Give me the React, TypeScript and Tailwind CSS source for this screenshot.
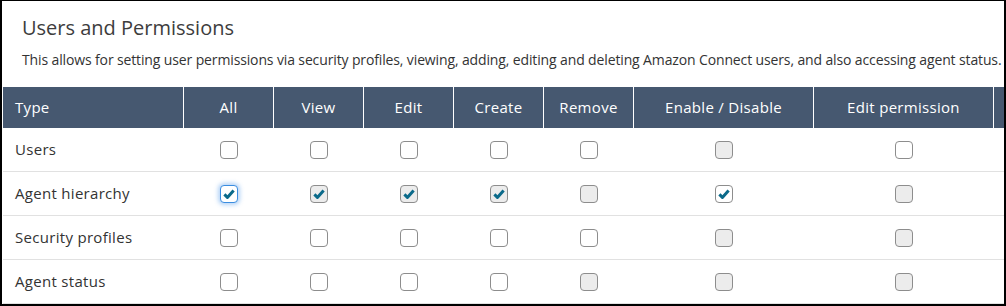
const columns = [
  { label: 'All', w: 'w-[90px]' },
  { label: 'View', w: 'w-[90px]' },
  { label: 'Edit', w: 'w-[90px]' },
  { label: 'Create', w: 'w-[90px]' },
  { label: 'Remove', w: 'w-[90px]' },
  { label: 'Enable / Disable', w: 'w-[180px]' },
  { label: 'Edit permission', w: 'w-[180px]' },
];

// c = checked, d = disabled, f = focused
type Box = { c?: boolean; d?: boolean; f?: boolean };

const rows: { type: string; boxes: Box[] }[] = [
  { type: 'Users', boxes: [{}, {}, {}, {}, {}, { d: true }, {}] },
  {
    type: 'Agent hierarchy',
    boxes: [
      { c: true, f: true },
      { c: true, d: true },
      { c: true, d: true },
      { c: true, d: true },
      { d: true },
      { c: true },
      { d: true },
    ],
  },
  { type: 'Security profiles', boxes: [{}, {}, {}, {}, {}, { d: true }, { d: true }] },
  { type: 'Agent status', boxes: [{}, {}, {}, {}, { d: true }, { d: true }, { d: true }] },
];

function Checkbox({ c, d, f }: Box) {
  return (
    <span
      className={
        'flex h-[18px] w-[18px] items-center justify-center rounded-[4px] border ' +
        (f
          ? 'border-[#3b8de0] bg-white shadow-[0_0_4px_2px_rgba(40,130,230,0.35)]'
          : d
            ? 'border-[#8d8d8d] bg-[#ececec]'
            : 'border-[#8d8d8d] bg-white')
      }
    >
      {c && (
        <svg width="14" height="14" viewBox="0 0 14 14" fill="none">
          <path
            d="M2.4 7.4 L5.4 10.4 L11.6 3.4"
            stroke="#0b6a8a"
            strokeWidth="3"
            strokeLinejoin="round"
          />
        </svg>
      )}
    </span>
  );
}

export default function App() {
  return (
    <div className="h-[306px] w-[1006px] overflow-hidden border-t border-r-2 border-b-2 border-l-2 border-black bg-white font-['Open_Sans','Noto_Sans',sans-serif] text-[#333]">
      {/* heading */}
      <div className="pl-5 pt-[13px]">
        <h1 className="text-[20px] leading-[28px] text-[#3d3d3d]">Users and Permissions</h1>
        <p className="mt-[9px] whitespace-nowrap text-[14px] leading-[18px] tracking-[-0.13px] text-[#333]">
          This allows for setting user permissions via security profiles, viewing, adding, editing and
          deleting Amazon Connect users, and also accessing agent status.
        </p>
      </div>

      {/* table */}
      <div className="ml-px mt-[18px]">
        <div className="flex h-[41px] bg-[#465870] text-[15px] tracking-[0.3px] text-white">
          <div className="flex w-[180px] items-center pl-3">Type</div>
          {columns.map((col) => (
            <div key={col.label} className={`flex ${col.w} items-center justify-center border-l border-white`}>
              {col.label}
            </div>
          ))}
          <div className="flex-1 border-l border-white" />
        </div>

        {rows.map((row) => (
          <div key={row.type} className="flex h-[44px] border-b border-[#e1e1e1] text-[15px] tracking-[0.3px]">
            <div className="flex w-[180px] items-center pl-3">{row.type}</div>
            {columns.map((col, i) => (
              <div key={col.label} className={`flex ${col.w} items-center justify-center pl-px`}>
                <Checkbox {...row.boxes[i]} />
              </div>
            ))}
          </div>
        ))}
      </div>
    </div>
  );
}
